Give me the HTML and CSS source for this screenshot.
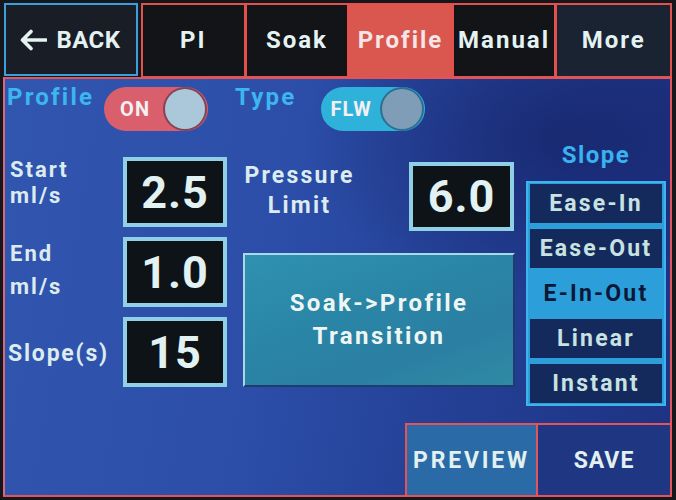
FILE: index.html
```html
<!DOCTYPE html>
<html lang="en">
<head>
<meta charset="utf-8">
<title>Profile settings</title>
<link rel="stylesheet" href="styles.css">
</head>
<body>
<div class="screen">
  <nav class="topbar">
    <button class="back">
      <svg class="back-arrow" width="28" height="22" viewBox="0 0 28 22" aria-hidden="true">
        <path d="M12 2.5 L3.5 11 L12 19.5 M3.5 11 H27" fill="none" stroke="#e6f2f2" stroke-width="3.6" stroke-linecap="round" stroke-linejoin="round"/>
      </svg>
      <span>BACK</span>
    </button>
    <div class="tabs">
      <div class="tab">PI</div>
      <div class="tab">Soak</div>
      <div class="tab active">Profile</div>
      <div class="tab">Manual</div>
      <div class="tab more">More</div>
    </div>
  </nav>

  <main class="panel">
    <div class="row-toggles">
      <span class="label-cyan">Profile</span>
      <div class="toggle toggle-on"><span class="toggle-text">ON</span><i class="knob"></i></div>
      <span class="label-cyan label-type">Type</span>
      <div class="toggle toggle-flw"><span class="toggle-text">FLW</span><i class="knob"></i></div>
    </div>

    <div class="body">
      <div class="params">
        <div class="plabel plabel-start">Start<br>ml/s</div>
        <div class="vbox">2.5</div>
        <div class="pressure">
          <div class="plabel plabel-pressure">Pressure<br>Limit</div>
          <div class="vbox vbox-pressure">6.0</div>
        </div>

        <div class="plabel plabel-end">End<br>ml/s</div>
        <div class="vbox">1.0</div>
        <button class="transition">Soak-&gt;Profile<br>Transition</button>

        <div class="plabel plabel-slope">Slope(s)</div>
        <div class="vbox">15</div>
      </div>

      <div class="slope-col">
        <div class="slope-title">Slope</div>
        <ul class="slope-list">
          <li class="slope-item">Ease-In</li>
          <li class="slope-item">Ease-Out</li>
          <li class="slope-item selected">E-In-Out</li>
          <li class="slope-item">Linear</li>
          <li class="slope-item">Instant</li>
        </ul>
      </div>
    </div>

    <div class="footer">
      <button class="fbtn fbtn-preview">PREVIEW</button>
      <button class="fbtn fbtn-save">SAVE</button>
    </div>
  </main>
</div>
</body>
</html>
```

FILE: styles.css
```css
* { box-sizing: border-box; }

html, body {
  margin: 0;
  padding: 0;
  background: #15171d;
}

body {
  font-family: Roboto, "Liberation Sans", Arial, sans-serif;
  font-weight: 700;
  color: #e4f2f2;
}

button {
  font: inherit;
  color: inherit;
  padding: 0;
  margin: 0;
}

.screen {
  width: 676px;
  height: 500px;
  padding: 3px 4px 3px 3px;
  display: flex;
  flex-direction: column;
  background: #15171d;
}

/* ---------- top bar ---------- */
.topbar {
  display: flex;
  height: 74px;
  flex: none;
}

.back {
  margin-left: 1px;
  width: 134px;
  height: 73px;
  border: 2px solid #3b9fdb;
  background: #191d25;
  display: flex;
  align-items: center;
  justify-content: center;
  gap: 9px;
  font-size: 24px;
  letter-spacing: 0.5px;
  padding-right: 2px;
}

.tabs {
  margin-left: 3px;
  flex: 1;
  display: flex;
  gap: 3px;
  padding: 2px 2px 1px 2px;
  background: #e2514d;
}

.tab {
  flex: 1;
  display: flex;
  align-items: center;
  justify-content: center;
  background: #121418;
  font-size: 24px;
  letter-spacing: 2px;
  padding-bottom: 2px;
}

.tab.active {
  background: #d9574f;
  color: #f2e6e6;
}

.tab.more {
  flex: 1.12;
  background: #1a2331;
}

/* ---------- main panel ---------- */
.panel {
  flex: none;
  width: 669px;
  height: 420px;
  border: 2px solid #e0555a;
  border-left-color: #d46a7a;
  background:
    radial-gradient(ellipse 260px 160px at 560px 60px, rgba(18, 26, 90, 0.55), rgba(18, 26, 90, 0) 100%),
    linear-gradient(100deg, #3156b0 0%, #2c4ea9 40%, #233f94 70%, #1e3282 100%);
  display: flex;
  flex-direction: column;
}

.row-toggles {
  margin-top: 8px;
  padding-left: 2px;
  height: 44px;
  display: flex;
  align-items: flex-start;
}

.label-cyan {
  color: #3db6ee;
  font-size: 24px;
  letter-spacing: 2.2px;
  line-height: 24px;
  margin-top: -2px;
}

.label-type {
  margin-left: 27px;
}

.toggle {
  position: relative;
  width: 104px;
  height: 44px;
  border-radius: 22px;
  display: flex;
  align-items: center;
  padding-left: 16px;
}

.toggle-on {
  margin-left: 10px;
  background: #d85f6b;
}

.toggle-flw {
  margin-left: 25px;
  background: #2fb2da;
  padding-left: 9px;
}

.toggle-text {
  font-size: 20px;
  color: #f4f0f2;
  letter-spacing: 1px;
}

.knob {
  position: absolute;
  right: 3px;
  top: 2px;
  width: 40px;
  height: 40px;
  border-radius: 50%;
  box-shadow: 0 0 0 2px rgba(40, 30, 60, 0.45);
}

.toggle-on .knob { background: #abc8da; }
.toggle-flw .knob { background: #7f9db6; }

/* ---------- body ---------- */
.body {
  display: flex;
  align-items: flex-start;
}

.params {
  margin-top: 26px;
  display: grid;
  grid-template-columns: 118px 120px 272px;
  grid-template-rows: 70px 70px 70px;
  row-gap: 10px;
}

.plabel {
  font-size: 22px;
  letter-spacing: 2px;
  color: #dcecee;
  padding-left: 5px;
}

.plabel-start { line-height: 26px; padding-top: 0px; }
.plabel-end { line-height: 33px; padding-top: 0px; }
.plabel-slope { align-self: center; padding-left: 3px; padding-top: 2px; letter-spacing: 1.8px; font-size: 23px; }

.vbox {
  width: 104px;
  height: 70px;
  border: 4px solid #8fd0e7;
  background: #0d1317;
  display: flex;
  align-items: center;
  justify-content: center;
  font-size: 45px;
  letter-spacing: 1px;
  color: #e2f2f2;
}

.pressure {
  display: flex;
  justify-content: space-between;
  align-items: flex-start;
}

.plabel-pressure {
  width: 113px;
  padding-left: 0;
  padding-top: 4px;
  text-align: center;
  line-height: 30px;
  font-size: 23px;
  letter-spacing: 2.2px;
  margin-right: -4px;
}

.vbox-pressure {
  width: 105px;
  height: 69px;
  margin-top: 5px;
  margin-right: 1px;
}

.transition {
  grid-column: 3;
  grid-row: 2 / 4;
  margin-top: 16px;
  height: 134px;
  width: 272px;
  border: 2px solid #a9d9e6;
  border-right-color: #1d3c70;
  border-bottom-color: #1d3c70;
  background: linear-gradient(160deg, #3091b0 0%, #2a86a6 40%, #2a7fa2 70%, #2f8aa4 100%);
  font-size: 24px;
  letter-spacing: 2.4px;
  line-height: 33px;
  color: #eef6f4;
  text-align: center;
}

/* ---------- slope column ---------- */
.slope-col {
  margin-left: 11px;
  width: 140px;
}

.slope-title {
  margin-top: 11px;
  height: 26px;
  line-height: 26px;
  text-align: center;
  font-size: 24px;
  letter-spacing: 1.5px;
  color: #39b2f0;
}

.slope-list {
  list-style: none;
  margin: 13px 0 0 0;
  padding: 1px 2px;
  border: 2px solid #3fb4ec;
  background: #2c9fdb;
  display: flex;
  flex-direction: column;
  gap: 6px;
}

.slope-item {
  height: 39px;
  background: #152a5c;
  color: #c8e2e2;
  display: flex;
  align-items: center;
  justify-content: center;
  font-size: 23px;
  letter-spacing: 2.2px;
  white-space: nowrap;
}

.slope-item.selected {
  background: transparent;
  color: #0b1736;
}

/* ---------- footer ---------- */
.footer {
  margin-top: auto;
  margin-right: -2px;
  margin-bottom: -2px;
  height: 74px;
  display: flex;
  justify-content: flex-end;
}

.fbtn {
  height: 74px;
  border: 2px solid #e2545a;
  font-size: 23px;
  letter-spacing: 2.8px;
  color: #e2f0f0;
  display: flex;
  align-items: center;
  justify-content: center;
}

.fbtn-preview {
  width: 133px;
  background: #2a6aa6;
}

.fbtn-save {
  width: 134px;
  border-left: 0;
  background: #1f3783;
  letter-spacing: 1px;
}
```
